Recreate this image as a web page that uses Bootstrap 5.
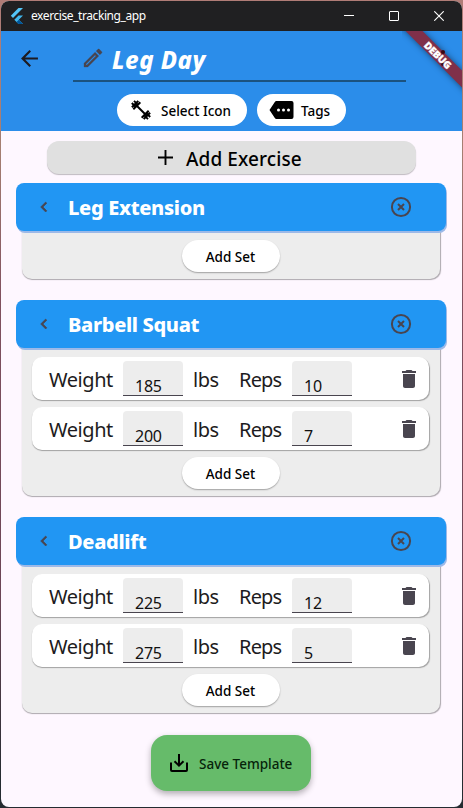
<!DOCTYPE html>
<html lang="en">
<head>
<meta charset="utf-8">
<meta name="viewport" content="width=device-width, initial-scale=1">
<title>exercise_tracking_app</title>
<link href="https://cdn.jsdelivr.net/npm/bootstrap@5.3.0/dist/css/bootstrap.min.css" rel="stylesheet">
<style>
html{height:100%}
body{height:808px;margin:0;overflow:hidden;background:linear-gradient(#b07c77 0,#a57f72 150px,#80505f 300px,#6b4556 600px,#252b31 780px);padding:1px;font-family:"Noto Sans","Open Sans",sans-serif;color:#1d1b20}
svg{display:block;flex:none}
.window{height:806px;width:461px;border-radius:8px;background:#fef7ff}
.titlebar{height:30px;background:#202022;color:#fff;font-size:12px;padding-left:9px}
.titlebar .caption{margin-left:7px;letter-spacing:-.42px}
.winbtns{gap:35px;margin-right:18px}
.appbar{height:100px;background:#2b8dea}
.back{padding:18px 0 0 19px}
.title-field{width:333px;height:51px;border-bottom:2px solid #1b527f;margin-left:34px;padding-left:10px}
.title-text{font-size:24px;font-weight:800;font-style:italic;color:#fff;margin-left:9px;line-height:1;letter-spacing:.5px}
.pill{height:32px;border-radius:16px;background:#fff;border:0;color:#000;font-weight:500;font-size:13.5px;line-height:1;padding:0}
.pill-icon{width:130px;padding-left:14px}
.pill-tags{width:89px;padding-left:12px}
.pill-row{padding:12px 0 0 116px;gap:10px}
.ribbon-box{position:absolute;right:1px;top:31px;width:60px;height:70px;overflow:hidden}
.ribbon{position:absolute;width:120px;height:12px;left:-24px;top:18px;transform:rotate(45deg);background:#80304a;box-shadow:0 0 6px rgba(0,0,0,.5);color:#fff;font-family:"Open Sans",sans-serif;font-size:10px;font-weight:800;-webkit-text-stroke:.3px #fff;line-height:12px;text-align:center;letter-spacing:-.2px}
.menu-dot{position:absolute;left:39px;width:4px;height:4px;border-radius:50%;background:#3b0610}
.add-exercise{width:369px;height:33px;margin:10px 0 9px 46px;border:0;border-radius:12px;background:#e0e0e0;box-shadow:0 1px 1px rgba(0,0,0,.25);color:#000;font-weight:500;font-size:19px;line-height:1;padding:0;letter-spacing:.1px}
.exercise{width:430px;margin:0 0 21px 15px}
.exercise-head{position:relative;z-index:1;width:429.5px;height:48px;border-radius:8px;background:#2196f3;box-shadow:1px 2px 0 #9cb9e8;color:#fff;font-size:20px;font-weight:800;padding:0 32.5px 0 18px}
.exercise-head .name{margin-left:14px;margin-top:1px;line-height:1;letter-spacing:-.33px}
.exercise-body{width:418px;margin:0 0 0 6px;padding:9px 11px 7px 10px;border-radius:0 0 10px 10px;background:#ededed;box-shadow:.5px 1px 1px rgba(0,0,0,.32)}
.set-row{height:43px;margin-bottom:7px;border-radius:10px;background:#fff;box-shadow:.5px 1px 1px rgba(0,0,0,.32);font-size:20px;font-weight:400;padding:0 8px 0 17px}
.set-row span{line-height:1;white-space:nowrap;margin-top:3px}
.w-label{width:74px;letter-spacing:-.45px}
.l-label{width:46px;margin-left:10px;letter-spacing:-.5px}
.r-label{width:53px;letter-spacing:-.8px}
.value{width:60px;height:35px;border-radius:4px 4px 0 0;background:#ededed;border-bottom:1px solid #49454f;font-size:16px;color:#111;padding:15px 0 0 12px;line-height:21px;letter-spacing:-.25px}
.add-set{width:98px;box-shadow:0 1px 1.5px rgba(0,0,0,.32)}
.save{width:160px;height:56px;margin:22px 0 0 150px;border:0;border-radius:16px;background:#66bb6a;box-shadow:0 3px 6px rgba(0,0,0,.3);color:#06240a;font-weight:500;font-size:13.5px;padding:0}
.exercise:last-child{margin-bottom:0}
</style>
<script src="https://cdn.jsdelivr.net/npm/bootstrap@5.3.0/dist/js/bootstrap.bundle.min.js"></script>
</head>
<body>
<svg width="0" height="0" class="position-absolute" aria-hidden="true">
<symbol id="chev" viewBox="0 0 24 24"><path d="M15.4 7.4 14 6l-6 6 6 6 1.4-1.400L10.800 12z" fill="#49454f" stroke="#49454f" stroke-width=".7"/></symbol>
<symbol id="cancel" viewBox="0 0 24 24"><circle cx="12" cy="12" r="9.100" fill="none" stroke="#49454f" stroke-width="2"/><path d="m9 9 6 6m0-6-6 6" stroke="#49454f" stroke-width="2"/></symbol>
<symbol id="trash" viewBox="0 0 24 24"><path d="M6 19c0 1.100.9 2 2 2h8c1.100 0 2-.9 2-2V7H6zM19 4h-3.500l-1-1h-5l-1 1H5v2h14z" fill="#49454f"/></symbol>
</svg>
<div class="window overflow-hidden">
  <header class="titlebar d-flex align-items-center">
    <svg width="14" height="17" viewBox="0 0 14 17"><path d="M8.500 0H13L3 10 .8 7.700z" fill="#54c5f8"/><path d="M8.500 7.500H13L8.800 11.700 13 16H8.500L4.300 11.700z" fill="#40b8ef"/><path d="m6.500 14 2.300-2.300L13 16H8.500z" fill="#01579b"/></svg>
    <span class="caption">exercise_tracking_app</span>
    <div class="winbtns d-flex align-items-center ms-auto">
      <svg width="10" height="10"><path d="M0 4.500h10" stroke="#fff"/></svg>
      <svg width="10" height="10"><rect x=".5" y=".5" width="9" height="9" rx=".5" fill="none" stroke="#fff"/></svg>
      <svg width="10" height="10"><path d="m.3.300 9.400 9.400m0-9.400L.3 9.700" stroke="#fff" stroke-width="1.100"/></svg>
    </div>
  </header>
  <div class="appbar">
    <div class="d-flex align-items-start">
      <div class="back"><svg width="19" height="19" viewBox="3 3 18 18"><path d="M20 11H7.830l5.590-5.590L12 4l-8 8 8 8 1.410-1.410L7.830 13H20z" fill="#1d1b20"/></svg></div>
      <div class="title-field d-flex align-items-center">
        <svg width="20" height="20" viewBox="2 2 20 20" class="mt-1"><path d="M14.060 9.020l.92.92L5.920 19H5v-.92zM17.660 3c-.25 0-.51.100-.7.290l-1.830 1.830 3.750 3.750 1.830-1.830c.39-.39.39-1.020 0-1.410l-2.340-2.340c-.2-.2-.45-.29-.71-.29zm-3.600 3.190L3 17.250V21h3.750L17.810 9.940z" fill="#49454f" stroke="#49454f" stroke-width=".3"/></svg>
        <span class="title-text mt-2">Leg Day</span>
      </div>
    </div>
    <div class="pill-row d-flex">
      <button class="pill pill-icon d-flex align-items-center">
        <svg width="20" height="20" viewBox="0 0 20 20" fill="none" stroke="#000"><path d="m4 4 12 12" stroke-width="2"/><path d="M7.300.900.900 7.300M9.300 2.300 2.300 9.300M19.100 12.700l-6.400 6.400M17.700 10.700 10.700 17.700" stroke-width="2"/><path d="m3 .8 4 4M.8 3l4 4M17 19.200l-4-4M19.200 17l-4-4" stroke-width="1.900"/></svg>
        <span style="margin:3px 0 0 10px">Select Icon</span>
      </button>
      <button class="pill pill-tags d-flex align-items-center">
        <svg width="25" height="18" viewBox="0 0 25 18"><path d="M7.500 0H22.500a2 2 0 0 1 2 2v14a2 2 0 0 1-2 2H7.500a2 2 0 0 1-1.700-.9L.5 9 5.800.900A2 2 0 0 1 7.500 0z"/><g fill="#fff"><circle cx="9.500" cy="9" r="1.500"/><circle cx="14.500" cy="9" r="1.500"/><circle cx="19.500" cy="9" r="1.500"/></g></svg>
        <span style="margin:3px 0 0 7px">Tags</span>
      </button>
    </div>
  </div>
  <button class="add-exercise d-flex align-items-center">
    <svg width="15" height="15" viewBox="0 0 15 15" style="margin-left:111px"><path d="M7.500 0v15M0 7.500h15" stroke="#000" stroke-width="1.900"/></svg>
    <span style="margin:4px 0 0 13px">Add Exercise</span>
  </button>
  <main id="exercises"></main>
  <button class="save d-flex align-items-center">
    <svg width="20" height="20" viewBox="0 0 20 20" style="margin-left:18px" fill="none" stroke="#000" stroke-width="2"><path d="M2 9.500V17q0 1 1 1h14q1 0 1-1V9.500M10 1v11M5.500 8.200 10 12.700l4.500-4.500"/></svg>
    <span style="margin:3px 0 0 10px">Save Template</span>
  </button>
</div>
<div class="ribbon-box"><div class="ribbon"></div><i class="menu-dot" style="top:19px"></i><i class="menu-dot" style="top:31px"></i><div class="ribbon bg-transparent shadow-none">DEBUG</div></div>
<script>
const data = [
  ["Leg Extension", []],
  ["Barbell Squat", [[185, 10], [200, 7]]],
  ["Deadlift", [[225, 12], [275, 5]]]
];
const icon = (id, size) => `<svg width="${size}" height="${size}"><use href="#${id}"/></svg>`;
document.getElementById("exercises").innerHTML = data.map(([name, sets]) => `
  <section class="exercise">
    <div class="exercise-head d-flex align-items-center">
      ${icon("chev", 20)}<span class="name">${name}</span>
      <div class="ms-auto">${icon("cancel", 24)}</div>
    </div>
    <div class="exercise-body">
      ${sets.map(([w, r]) => `<div class="set-row d-flex align-items-center">
        <span class="w-label">Weight</span><div class="value">${w}</div>
        <span class="l-label">lbs</span><span class="r-label">Reps</span><div class="value">${r}</div>
        <div class="ms-auto">${icon("trash", 24)}</div>
      </div>`).join("")}
      <button class="pill add-set mx-auto d-flex align-items-center justify-content-center"><span class="mt-1">Add Set</span></button>
    </div>
  </section>`).join("");
</script>
</body>
</html>
